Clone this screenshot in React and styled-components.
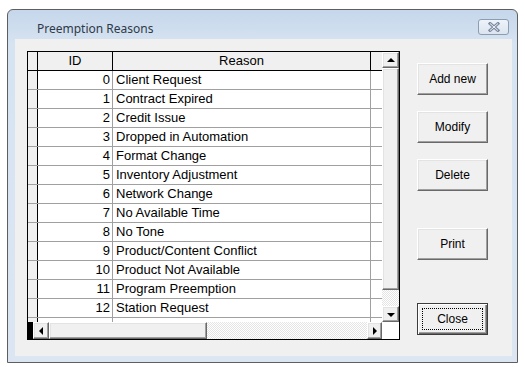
import React from 'react'
import styled, { createGlobalStyle, css } from 'styled-components'

const GlobalStyle = createGlobalStyle`
  html, body {
    margin: 0;
    padding: 0;
    background: #fff;
  }
  body {
    font-family: "Liberation Sans", Arial, sans-serif;
  }
  * { box-sizing: border-box; }
`

const reasons = [
  'Client Request',
  'Contract Expired',
  'Credit Issue',
  'Dropped in Automation',
  'Format Change',
  'Inventory Adjustment',
  'Network Change',
  'No Available Time',
  'No Tone',
  'Product/Content Conflict',
  'Product Not Available',
  'Program Preemption',
  'Station Request',
]

const raised = css`
  background: #f0f0f0;
  border: 1px solid;
  border-color: #fff #696969 #696969 #fff;
  box-shadow: inset -1px -1px #a0a0a0, inset 1px 1px #e3e3e3;
`

const Page = styled.div`
  width: 525px;
  height: 367px;
  padding: 9px 0 0 7px;
`

const Window = styled.div`
  width: 511px;
  height: 354px;
  border: 1px solid #5e5e5e;
  border-radius: 6px 6px 0 0;
  background: linear-gradient(#c6d7eb, #d6e3f1 34px, #dbe6f2);
  display: flex;
  flex-direction: column;
`

const TitleBar = styled.div`
  height: 29px;
  display: flex;
  justify-content: space-between;
  align-items: flex-start;
  padding: 0 8px 0 29px;
`

const Title = styled.div`
  margin-top: 11px;
  font-family: "Noto Sans", "DejaVu Sans", sans-serif;
  font-size: 12px;
  line-height: 16px;
  color: #2e3a48;
`

const CloseX = styled.div`
  margin-top: 9px;
  width: 31px;
  height: 16px;
  border: 1px solid #8c9cb2;
  border-radius: 3px;
  background: linear-gradient(#eef3f9, #dbe4ef);
  display: flex;
  align-items: center;
  justify-content: center;
`

const Frame = styled.div`
  flex: 1;
  padding: 0 5px 6px 7px;
  display: flex;
`

const Client = styled.div`
  flex: 1;
  background: #f0f0f0;
  display: flex;
  gap: 17px;
  padding: 12px 0 0 12px;
`

const GridBox = styled.div`
  width: 373px;
  height: 289px;
  border: 1px solid #000;
  display: grid;
  grid-template-columns: 354px 17px;
  grid-template-rows: 270px 17px;
  background: #fff;
`

const DataArea = styled.div`
  overflow: hidden;
  background: #fff;
`

const Row = styled.div`
  display: grid;
  grid-template-columns: 10px 75px 258px 11px;
  height: 19px;
  border-bottom: 1px solid ${p => (p.$header ? '#000' : '#a0a0a0')};
  font-size: 13px;
  line-height: 18px;
  color: #000;
`

const Cell = styled.div`
  border-right: 1px solid ${p => p.$line || '#a0a0a0'};
  background: ${p => p.$bg || '#fff'};
  text-align: ${p => p.$align || 'left'};
  padding: ${p => p.$pad || '0'};
  white-space: nowrap;
  overflow: hidden;
`

const VScroll = styled.div`
  display: flex;
  flex-direction: column;
  background: repeating-conic-gradient(#fff 0 25%, #e4e4e4 0 50%) 0 0 / 2px 2px;
`

const HScroll = styled.div`
  display: flex;
  background: repeating-conic-gradient(#fff 0 25%, #e4e4e4 0 50%) 0 0 / 2px 2px;
`

const Corner = styled.div`
  background: #fff;
`

const BlackStub = styled.div`
  width: 5px;
  background: #000;
`

const ScrollBtn = styled.div`
  ${raised}
  width: ${p => p.$w || 17}px;
  height: ${p => p.$h || 17}px;
  flex: none;
  display: flex;
  align-items: center;
  justify-content: center;
`

const Thumb = styled.div`
  ${raised}
  flex: none;
  width: ${p => (p.$w ? p.$w + 'px' : '17px')};
  height: ${p => (p.$h ? p.$h + 'px' : '17px')};
`

const Track = styled.div`
  flex: 1;
`

const Arrow = styled.span`
  width: 0;
  height: 0;
  border: 4px solid transparent;
  ${p => p.$dir === 'up' && css`border-bottom-color: #000; border-top-width: 0; margin-top: -1px;`}
  ${p => p.$dir === 'down' && css`border-top-color: #000; border-bottom-width: 0; margin-top: 1px;`}
  ${p => p.$dir === 'left' && css`border-right-color: #000; border-left-width: 0;`}
  ${p => p.$dir === 'right' && css`border-left-color: #000; border-right-width: 0; margin-left: 1px;`}
`

const Buttons = styled.div`
  display: flex;
  flex-direction: column;
`

const Button = styled.button`
  ${raised}
  width: 71px;
  height: 32px;
  margin-top: ${p => p.$gap || 0}px;
  font-family: "Liberation Sans", Arial, sans-serif;
  font-size: 12px;
  color: #000;
  padding: 0;
  cursor: pointer;
`

const DefaultButton = styled(Button)`
  border: 1px solid #3c3c3c;
  box-shadow: inset 1px 1px #fff, inset -1px -1px #696969, inset -2px -2px #a0a0a0;
  display: flex;
  padding: 4px;
`

const Focus = styled.span`
  flex: 1;
  border: 1px dotted #000;
  display: flex;
  align-items: center;
  justify-content: center;
`

function App() {
  return (
    <Page>
      <GlobalStyle />
      <Window>
        <TitleBar>
          <Title>Preemption Reasons</Title>
          <CloseX>
            <svg width="14" height="10" viewBox="0 0 14 10">
              <path d="M3 1.5 L11 8.5 M11 1.5 L3 8.5" stroke="#7d8ca2" strokeWidth="3" strokeLinecap="square" />
              <path d="M3 1.5 L11 8.5 M11 1.5 L3 8.5" stroke="#eef2f7" strokeWidth="1" />
            </svg>
          </CloseX>
        </TitleBar>
        <Frame>
          <Client>
            <GridBox>
              <DataArea>
                <Row $header>
                  <Cell $bg="#f0f0f0" $line="#000" />
                  <Cell $bg="#f0f0f0" $line="#000" $align="center">ID</Cell>
                  <Cell $bg="#f0f0f0" $line="#000" $align="center">Reason</Cell>
                  <Cell $bg="#f0f0f0" $line="transparent" />
                </Row>
                {reasons.map((r, i) => (
                  <Row key={r}>
                    <Cell $bg="#f0f0f0" $line="#000" />
                    <Cell $align="right" $pad="0 2px 0 0">{i}</Cell>
                    <Cell $pad="0 0 0 3px">{r}</Cell>
                    <Cell $line="transparent" />
                  </Row>
                ))}
                <Row>
                  <Cell $bg="#f0f0f0" $line="#000" />
                  <Cell />
                  <Cell />
                  <Cell $line="transparent" />
                </Row>
              </DataArea>
              <VScroll>
                <ScrollBtn $h={16}><Arrow $dir="up" /></ScrollBtn>
                <Thumb $h={222} />
                <Track />
                <ScrollBtn $h={16}><Arrow $dir="down" /></ScrollBtn>
              </VScroll>
              <HScroll>
                <BlackStub />
                <ScrollBtn $w={16}><Arrow $dir="left" /></ScrollBtn>
                <Thumb $w={158} />
                <Track />
                <ScrollBtn $w={15}><Arrow $dir="right" /></ScrollBtn>
              </HScroll>
              <Corner />
            </GridBox>
            <Buttons>
              <Button $gap={12}>Add new</Button>
              <Button $gap={16}>Modify</Button>
              <Button $gap={16}>Delete</Button>
              <Button $gap={37}>Print</Button>
              <DefaultButton $gap={43}><Focus>Close</Focus></DefaultButton>
            </Buttons>
          </Client>
        </Frame>
      </Window>
    </Page>
  )
}

export default App
